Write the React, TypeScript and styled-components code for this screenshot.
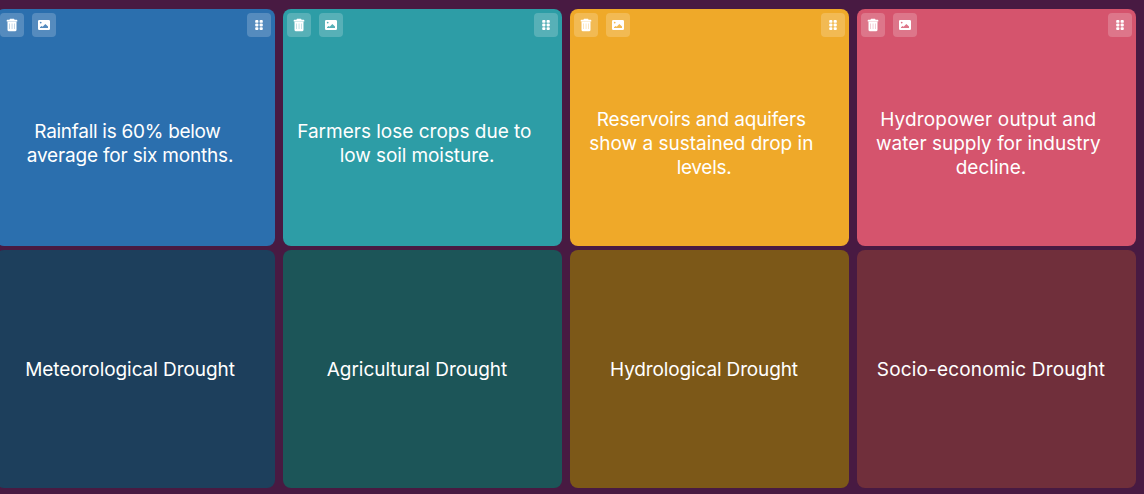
import styled, { createGlobalStyle } from 'styled-components';

const GlobalStyle = createGlobalStyle`
  body {
    margin: 0;
    overflow: hidden;
    background: #481a42;
  }
`;

interface Line {
  text: string;
  spacing?: number;
}

interface Pair {
  color: string;
  dimColor: string;
  clue: Line[];
  answer: Line[];
}

const pairs: Pair[] = [
  {
    color: '#2b6fae',
    dimColor: '#1d3f5c',
    clue: [
      { text: 'Rainfall is 60% below ', spacing: -0.28 },
      { text: 'average for six months.', spacing: -0.18 },
    ],
    answer: [{ text: 'Meteorological Drought', spacing: -0.07 }],
  },
  {
    color: '#2d9da6',
    dimColor: '#1c5558',
    clue: [{ text: 'Farmers lose crops due to ' }, { text: 'low soil moisture.', spacing: -0.08 }],
    answer: [{ text: 'Agricultural Drought', spacing: -0.04 }],
  },
  {
    color: '#efa929',
    dimColor: '#7c5818',
    clue: [
      { text: 'Reservoirs and aquifers ', spacing: -0.13 },
      { text: 'show a sustained drop in ', spacing: 0.01 },
      { text: 'levels.', spacing: -0.3 },
    ],
    answer: [{ text: 'Hydrological Drought', spacing: -0.14 }],
  },
  {
    color: '#d5546d',
    dimColor: '#702f3b',
    clue: [
      { text: 'Hydropower output and ', spacing: 0.17 },
      { text: 'water supply for industry ' },
      { text: 'decline.' },
    ],
    answer: [{ text: 'Socio-economic Drought', spacing: 0.16 }],
  },
];

const Board = styled.main`
  display: flex;
  gap: 8px;
  width: 1140px;
  height: 494px;
  box-sizing: border-box;
  margin-left: -4px;
  padding-top: 9px;
`;

const Column = styled.section`
  display: flex;
  flex-direction: column;
  gap: 4px;
  width: 279px;
`;

const Card = styled.div<{ $color: string; $height: number }>`
  display: flex;
  flex-direction: column;
  box-sizing: border-box;
  height: ${({ $height }) => $height}px;
  padding: 4px;
  border-radius: 8px;
  background: ${({ $color }) => $color};
`;

const Toolbar = styled.div`
  display: flex;
  gap: 8px;
  height: 24px;
  margin-bottom: 6px;
`;

const IconButton = styled.button<{ $end?: boolean }>`
  display: flex;
  align-items: center;
  justify-content: center;
  width: 24px;
  height: 24px;
  padding: 0;
  border: 0;
  border-radius: 4px;
  margin-left: ${({ $end }) => ($end ? 'auto' : 0)};
  background: rgba(255, 255, 255, 0.2);
  color: #fff;
`;

const Text = styled.div`
  display: flex;
  flex: 1;
  flex-direction: column;
  align-items: center;
  justify-content: center;
  padding: 2px 11px 0 0;
  color: #fff;
  font: 400 19px/24px 'Inter', sans-serif;
`;

const TextLine = styled.span<{ $spacing: number }>`
  white-space: pre;
  letter-spacing: ${({ $spacing }) => $spacing}px;
`;

const TrashIcon = () => (
  <svg width="12" height="14" viewBox="0 0 12 14" fill="currentColor">
    <path d="M4 .8h4l.6 1h2.100a.6.6 0 0 1 .6.6V3.600H.7V2.400a.6.6 0 0 1 .6-.6h2.100z" />
    <path
      fillRule="evenodd"
      d="M1.500 3.500h9V11.800a1.500 1.500 0 0 1-1.500 1.500H3a1.500 1.500 0 0 1-1.500-1.500zM3.500 5.500v5.500h.35V5.500zM5.850 5.500v5.500h.35V5.500zM8.200 5.500v5.500h.35V5.500z"
    />
  </svg>
);

const ImageIcon = () => (
  <svg width="12" height="10" viewBox="0 0 12 10" fill="currentColor">
    <path
      fillRule="evenodd"
      d="M1.300 0h9.400A1.300 1.300 0 0 1 12 1.300v7.400a1.300 1.300 0 0 1-1.300 1.300H1.300A1.300 1.300 0 0 1 0 8.700V1.300A1.300 1.300 0 0 1 1.300 0zM2.700 1.700a.9.9 0 1 0 0 1.800.9.9 0 0 0 0-1.800zM2 8h8V6.600L7.300 4 4.700 6.700 3.600 5.900 2 7.200z"
    />
  </svg>
);

const GripIcon = () => (
  <svg width="8" height="10" viewBox="0 0 8 10" fill="currentColor">
    {[0, 3.6, 7.2].map((y) => (
      <g key={y}>
        <rect x="0.200" y={y} width="3.200" height="2.800" rx="0.900" />
        <rect x="4.600" y={y} width="3.200" height="2.800" rx="0.900" />
      </g>
    ))}
  </svg>
);

const CardText = ({ lines }: { lines: Line[] }) => (
  <Text>
    {lines.map(({ text, spacing = 0 }) => (
      <TextLine key={text} $spacing={spacing}>
        {text}
      </TextLine>
    ))}
  </Text>
);

export default function App() {
  return (
    <>
      <GlobalStyle />
      <Board>
        {pairs.map(({ color, dimColor, clue, answer }) => (
          <Column key={color}>
            <Card $color={color} $height={237}>
              <Toolbar>
                <IconButton aria-label="Delete">
                  <TrashIcon />
                </IconButton>
                <IconButton aria-label="Image">
                  <ImageIcon />
                </IconButton>
                <IconButton aria-label="Move" $end>
                  <GripIcon />
                </IconButton>
              </Toolbar>
              <CardText lines={clue} />
            </Card>
            <Card $color={dimColor} $height={238}>
              <CardText lines={answer} />
            </Card>
          </Column>
        ))}
      </Board>
    </>
  );
}
